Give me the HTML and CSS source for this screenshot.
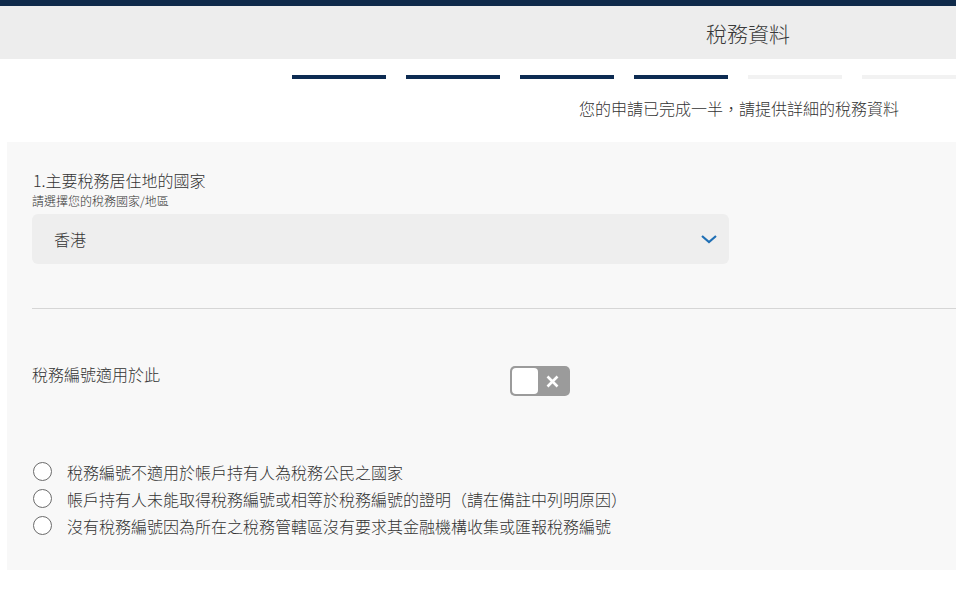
FILE: index.html
```html
<!DOCTYPE html>
<html lang="zh-Hant">
<head>
<meta charset="utf-8">
<title>稅務資料</title>
<link rel="stylesheet" href="styles.css">
</head>
<body>
<div class="topbar"></div>
<header class="header">
  <h1 class="title">稅務資料</h1>
</header>
<div class="progress">
  <span class="step done"></span>
  <span class="step done"></span>
  <span class="step done"></span>
  <span class="step done"></span>
  <span class="step"></span>
  <span class="step"></span>
</div>
<p class="subtitle">您的申請已完成一半，請提供詳細的稅務資料</p>
<section class="card">
  <div class="question">1.主要稅務居住地的國家</div>
  <div class="hint">請選擇您的稅務國家/地區</div>
  <div class="select">
    <span class="select-value">香港</span>
    <svg class="chevron" width="18" height="10" viewBox="0 0 18 10"><path d="M2 2 L9 8 L16 2" fill="none" stroke="#1f6fb5" stroke-width="2.2"/></svg>
  </div>
  <hr class="divider">
  <div class="toggle-row">
    <span class="toggle-label">稅務編號適用於此</span>
    <span class="toggle">
      <span class="knob"></span>
      <svg class="x" width="13" height="13" viewBox="0 0 13 13"><path d="M1.5 1.5 L11.5 11.5 M11.5 1.5 L1.5 11.5" stroke="#fff" stroke-width="2.6"/></svg>
    </span>
  </div>
  <ul class="radios">
    <li class="radio"><span class="circle"></span>稅務編號不適用於帳戶持有人為稅務公民之國家</li>
    <li class="radio"><span class="circle"></span>帳戶持有人未能取得稅務編號或相等於稅務編號的證明（請在備註中列明原因）</li>
    <li class="radio"><span class="circle"></span>沒有稅務編號因為所在之稅務管轄區沒有要求其金融機構收集或匯報稅務編號</li>
  </ul>
</section>
</body>
</html>
```

FILE: styles.css
```css
* { box-sizing: border-box; }
html, body {
  margin: 0;
  padding: 0;
  background: #ffffff;
  font-family: "Noto Sans CJK TC", "Noto Sans CJK SC", "Liberation Sans", sans-serif;
  color: #333333;
  overflow: hidden;
}
.topbar {
  height: 6px;
  background: #0f2a4a;
}
.header {
  height: 53px;
  background: #ededed;
  display: flex;
  align-items: center;
  justify-content: flex-end;
  padding-right: 166px;
}
.title {
  margin: 0;
  font-size: 21px;
  font-weight: 300;
  line-height: 26px;
  color: #3a3a3a;
}
.progress {
  display: flex;
  justify-content: flex-end;
  gap: 20px;
  margin-top: 16px;
  padding-left: 292px;
}
.step {
  flex: 0 0 94px;
  height: 4px;
  background: #f2f2f2;
}
.step.done { background: #0d2b52; }
.subtitle {
  margin: 17px 0 0;
  text-align: right;
  padding-right: 57px;
  font-size: 16px;
  line-height: 24px;
  font-weight: 300;
}
.card {
  margin: 22px 0 0 7px;
  background: #f8f8f8;
  padding: 27px 0 31px 25px;
}
.question {
  font-size: 16px;
  line-height: 22px;
  font-weight: 300;
  padding-left: 1px;
}
.hint {
  margin-top: 2px;
  font-size: 12px;
  line-height: 16px;
  font-weight: 300;
}
.select {
  margin-top: 5px;
  width: 697px;
  height: 50px;
  background: #eeeeee;
  border-radius: 6px;
  display: flex;
  align-items: center;
  justify-content: space-between;
  padding: 0 11px 0 22px;
}
.select-value {
  font-size: 16px;
  font-weight: 300;
}
.chevron { display: block; }
.divider {
  margin: 44px 0 0;
  border: 0;
  height: 1px;
  background: #d6d6d6;
}
.toggle-row {
  margin-top: 57px;
  display: grid;
  grid-template-columns: 478px auto;
  align-items: start;
}
.toggle-label {
  font-size: 16px;
  line-height: 22px;
  font-weight: 300;
  margin-top: -3px;
}
.toggle {
  width: 60px;
  height: 30px;
  background: #9b9b9b;
  border-radius: 5px;
  display: flex;
  align-items: center;
  padding: 0 2px;
}
.knob {
  width: 26px;
  height: 26px;
  background: #ffffff;
  border-radius: 4px;
}
.x { margin-left: 8px; }
.radios {
  list-style: none;
  margin: 62px 0 0;
  padding: 0;
}
.radio {
  display: flex;
  align-items: center;
  height: 27px;
  font-size: 16px;
  font-weight: 300;
}
.circle {
  width: 19px;
  height: 19px;
  border: 1px solid #6b6b6b;
  border-radius: 50%;
  background: #ffffff;
  margin: 0 15px 0 1px;
  flex: none;
}
```
